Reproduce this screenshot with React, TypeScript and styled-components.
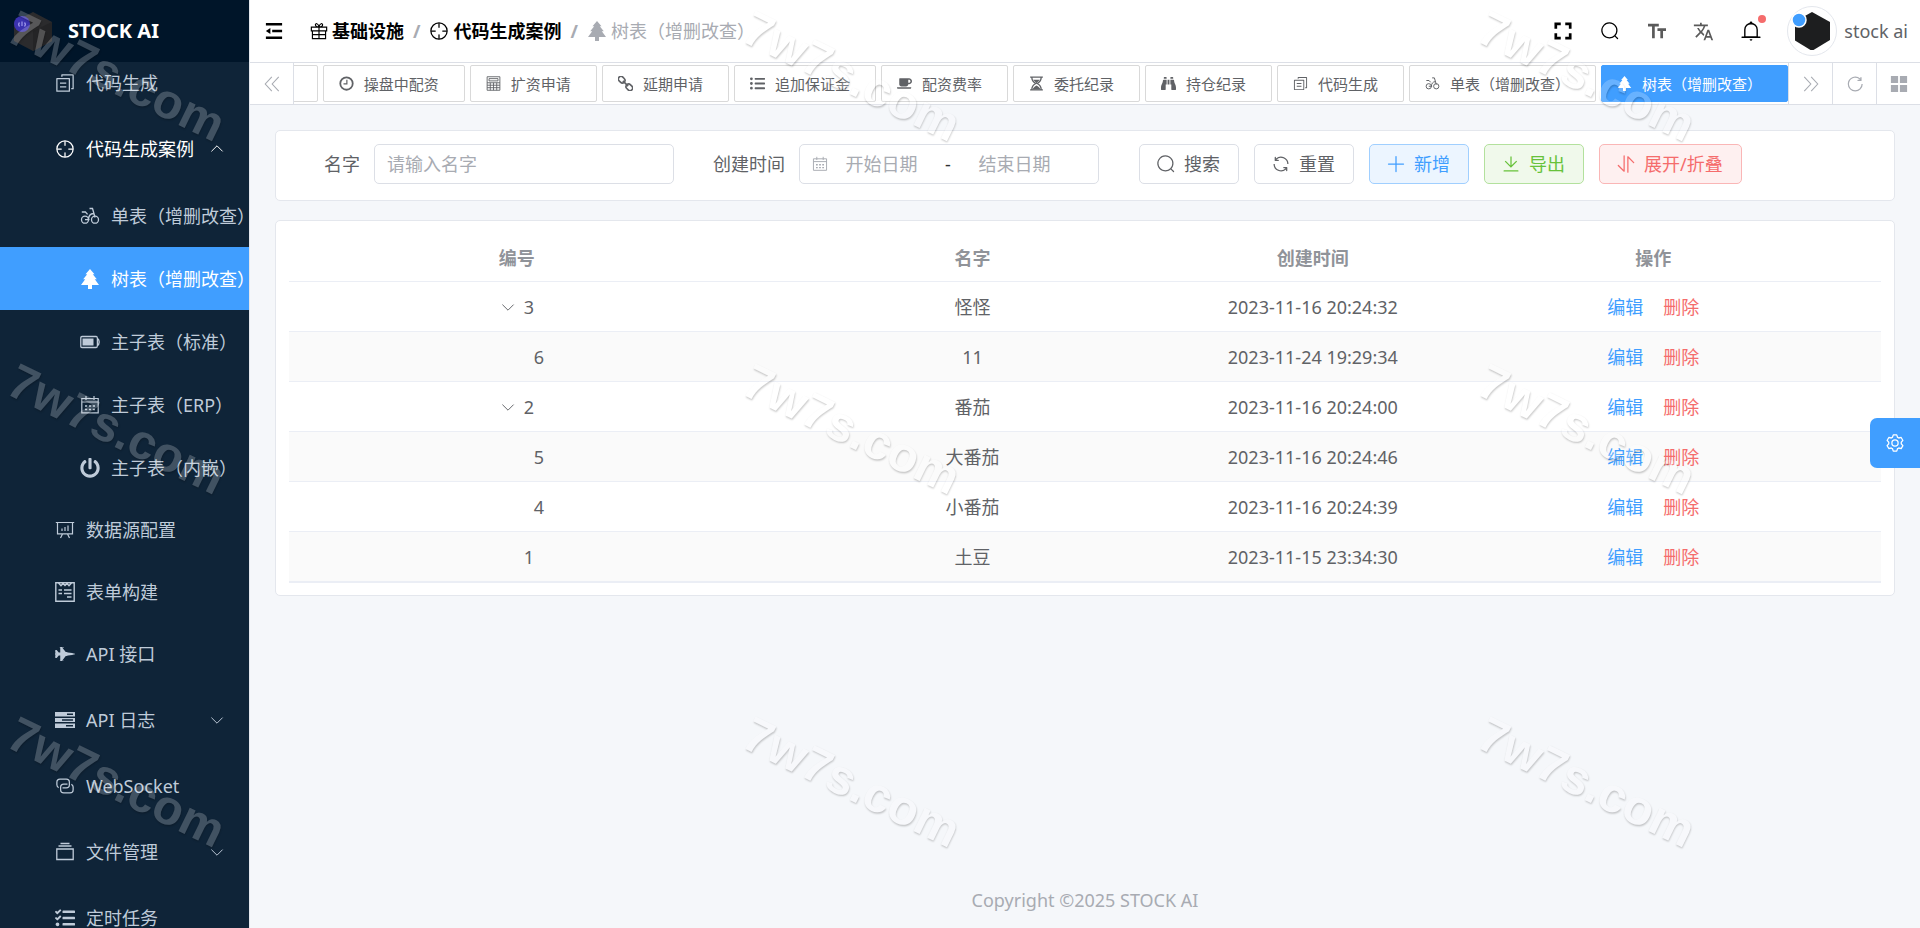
import React from 'react';
import styled, { createGlobalStyle, css } from 'styled-components';
import { MdTranslate } from 'react-icons/md';
import {
  FaPowerOff, FaFighterJet, FaTasks, FaCoffee, FaBinoculars, FaListUl,
} from 'react-icons/fa';

/* ---------- theme values ---------- */
const color = {
  primary: '#409eff',
  success: '#67c23a',
  danger: '#f56c6c',
  text: '#606266',
  muted: '#a8abb2',
  heading: '#909399',
  border: '#dcdfe6',
  borderLight: '#e4e7ed',
  page: '#f5f7fa',
  sidebar: '#0f2438',
  logo: '#001529',
  menuText: '#bfcbd9',
};

const GlobalStyle = createGlobalStyle`
  *, *::before, *::after { box-sizing: border-box; }
  body {
    margin: 0;
    font-family: "Noto Sans", "Noto Sans CJK SC", sans-serif;
    font-size: 18px;
    line-height: 24px;
    color: ${color.text};
    background: ${color.page};
  }
  button, input { font: inherit; color: inherit; }
  button { background: none; border: 0; padding: 0; cursor: pointer; white-space: nowrap; }
  a { color: inherit; text-decoration: none; }
`;

/* ---------- icons ---------- */
const Svg = styled.svg<{ $size?: number }>`
  width: ${p => p.$size ?? 20}px;
  height: ${p => p.$size ?? 20}px;
  flex: none;
  display: block;
`;

type IconProps = { size?: number };

const filled = (...paths: string[]) => ({ size }: IconProps) => (
  <Svg $size={size} viewBox="0 0 1024 1024" fill="currentColor" aria-hidden="true">
    {paths.map(d => <path key={d} d={d} />)}
  </Svg>
);

const lined = (width: number, body: React.ReactNode) => ({ size }: IconProps) => (
  <Svg $size={size} viewBox="0 0 20 20" fill="none" stroke="currentColor" strokeWidth={width} aria-hidden="true">
    {body}
  </Svg>
);

const SearchIcon = filled('m795.904 750.72 124.992 124.928a32 32 0 0 1-45.248 45.248L750.656 795.904a416 416 0 1 1 45.248-45.248zM480 832a352 352 0 1 0 0-704 352 352 0 0 0 0 704z');
const PlusIcon = filled('M480 480V128a32 32 0 0 1 64 0v352h352a32 32 0 1 1 0 64H544v352a32 32 0 1 1-64 0V544H128a32 32 0 0 1 0-64z');
const DownloadIcon = filled('M160 832h704a32 32 0 1 1 0 64H160a32 32 0 1 1 0-64zm384-253.696 236.288-236.352 45.248 45.248L508.8 704 192 387.2l45.248-45.248L480 584.704V128h64v450.304z');
const RefreshIcon = filled('M771.776 794.88A384 384 0 0 1 128 512h64a320 320 0 0 0 555.712 216.448H654.72a32 32 0 1 1 0-64h149.056a32 32 0 0 1 32 32v148.928a32 32 0 1 1-64 0v-50.56zM276.288 295.616h92.992a32 32 0 0 1 0 64H220.16a32 32 0 0 1-32-32V178.56a32 32 0 0 1 64 0v50.56A384 384 0 0 1 896.128 512h-64a320 320 0 0 0-555.776-216.384z');
const ReloadIcon = filled('M784.512 230.272v-50.56a32 32 0 1 1 64 0v149.056a32 32 0 0 1-32 32H667.52a32 32 0 1 1 0-64h92.992A320 320 0 1 0 524.8 833.152a320 320 0 0 0 320-320h64a384 384 0 0 1-384 384 384 384 0 0 1-384-384 384 384 0 0 1 643.712-282.88z');
const SortIcon = filled('M384 96a32 32 0 0 1 64 0v786.752a32 32 0 0 1-54.592 22.656L95.936 608a32 32 0 0 1 0-45.312h.128a32 32 0 0 1 45.184 0L384 805.632V96zm192 45.248a32 32 0 0 1 54.592-22.592L928.064 416a32 32 0 0 1 0 45.312h-.128a32 32 0 0 1-45.184 0L640 218.496V928a32 32 0 1 1-64 0V141.248z');
const AimIcon = filled(
  'M512 896a384 384 0 1 0 0-768 384 384 0 0 0 0 768zm0 64a448 448 0 1 1 0-896 448 448 0 0 1 0 896z',
  'M512 96a32 32 0 0 1 32 32v192a32 32 0 0 1-64 0V128a32 32 0 0 1 32-32zm0 576a32 32 0 0 1 32 32v192a32 32 0 1 1-64 0V704a32 32 0 0 1 32-32zM96 512a32 32 0 0 1 32-32h192a32 32 0 0 1 0 64H128a32 32 0 0 1-32-32zm576 0a32 32 0 0 1 32-32h192a32 32 0 1 1 0 64H704a32 32 0 0 1-32-32z',
);
const CopyIcon = filled('M128 320v576h576V320H128zm-32-64h640a32 32 0 0 1 32 32v640a32 32 0 0 1-32 32H96a32 32 0 0 1-32-32V288a32 32 0 0 1 32-32zM960 96v704a32 32 0 0 1-32 32h-96v-64h64V128H384v64h-64V96a32 32 0 0 1 32-32h576a32 32 0 0 1 32 32zM256 672h320v64H256v-64zm0-192h320v64H256v-64z');
const BellIcon = filled(
  'M512 64a64 64 0 0 1 64 64v64H448v-64a64 64 0 0 1 64-64z',
  'M256 768h512V448a256 256 0 1 0-512 0v320zm256-640a320 320 0 0 1 320 320v384H192V448a320 320 0 0 1 320-320z',
  'M96 768h832q32 0 32 32t-32 32H96q-32 0-32-32t32-32zm352 128h128a64 64 0 0 1-128 0z',
);
const ConnectionIcon = filled(
  'M640 384v64H448a128 128 0 0 0-128 128v128a128 128 0 0 0 128 128h320a128 128 0 0 0 128-128V576a128 128 0 0 0-64-110.848V394.88c74.56 26.368 128 97.472 128 181.056v128a192 192 0 0 1-192 192H448a192 192 0 0 1-192-192V576a192 192 0 0 1 192-192h192z',
  'M384 640v-64h192a128 128 0 0 0 128-128V320a128 128 0 0 0-128-128H256a128 128 0 0 0-128 128v128a128 128 0 0 0 64 110.848v70.272A192.064 192.064 0 0 1 64 448V320a192 192 0 0 1 192-192h320a192 192 0 0 1 192 192v128a192 192 0 0 1-192 192H384z',
);
const SettingIcon = filled('M600.704 64a32 32 0 0 1 30.464 22.208l35.2 109.376c14.784 7.232 28.928 15.36 42.432 24.512l112.384-24.192a32 32 0 0 1 34.432 15.36L944.32 364.8a32 32 0 0 1-4.032 37.504l-77.12 85.12a357.12 357.12 0 0 1 0 49.024l77.12 85.248a32 32 0 0 1 4.032 37.504l-88.704 153.6a32 32 0 0 1-34.432 15.296L708.8 803.904c-13.44 9.088-27.648 17.28-42.368 24.512l-35.264 109.376A32 32 0 0 1 600.704 960H423.296a32 32 0 0 1-30.464-22.208L357.696 828.48a351.616 351.616 0 0 1-42.56-24.64l-112.32 24.256a32 32 0 0 1-34.432-15.36L79.68 659.2a32 32 0 0 1 4.032-37.504l77.12-85.248a357.12 357.12 0 0 1 0-48.896l-77.12-85.248A32 32 0 0 1 79.68 364.8l88.704-153.6a32 32 0 0 1 34.432-15.296l112.32 24.256c13.568-9.152 27.776-17.408 42.56-24.64l35.2-109.312A32 32 0 0 1 423.232 64H600.64zm-23.424 64H446.72l-36.352 113.088-24.512 11.968a294.113 294.113 0 0 0-34.816 20.096l-22.656 15.36-116.224-25.088-65.28 113.152 79.68 88.192-1.92 27.136a293.12 293.12 0 0 0 0 40.192l1.92 27.136-79.808 88.192 65.344 113.152 116.224-25.024 22.656 15.296a294.113 294.113 0 0 0 34.816 20.096l24.512 11.968L446.72 896h130.688l36.48-113.152 24.448-11.904a288.282 288.282 0 0 0 34.752-20.096l22.592-15.296 116.288 25.024 65.28-113.152-79.744-88.192 1.92-27.136a293.12 293.12 0 0 0 0-40.256l-1.92-27.136 79.808-88.128-65.344-113.152-116.288 24.96-22.592-15.232a287.616 287.616 0 0 0-34.752-20.096l-24.448-11.904L577.344 128zM512 320a192 192 0 1 1 0 384 192 192 0 0 1 0-384zm0 64a128 128 0 1 0 0 256 128 128 0 0 0 0-256z');

const ChevronDown = lined(1.2, <path d="M3 7l7 7 7-7" />);
const ChevronUp = lined(1.2, <path d="M3 13l7-7 7 7" />);
const DoubleLeft = lined(1.2, <path d="M9.8 2 2.5 10l7.3 8M17.500 2l-7.300 8 7.300 8" />);
const DoubleRight = lined(1.2, <path d="M2.5 2l7.300 8-7.300 8M10.200 2l7.300 8-7.300 8" />);
const GiftIcon = lined(1.3, <path d="M1.5 5.6h17v4.2h-17zM2.7 9.8v8.6h14.6V9.8M10 5.6v12.8M2.7 14h14.6M10 5.4C8 5.4 6 4.6 6 3s3-2 4 2.4c1-4.4 4-4 4-2.4s-2 2.4-4 2.4z" />);
const ScooterIcon = lined(1.3, (
  <>
    <circle cx="5" cy="13.7" r="3.5" />
    <circle cx="15" cy="13.7" r="3.5" />
    <path d="M9.5 2.5h3l2.6 9M1.8 6h3.6l2.2 2.4M5 13.7h4.5M8.5 13.7c0-3.4 2-6 5-6.2" />
  </>
));
const BatteryIcon = lined(1.3, (
  <>
    <path d="M2 4.500h14.200q1.200 0 1.200 1.900 1.800 1 1.800 3.600t-1.800 3.600q0 1.900-1.200 1.900H2q-1.200 0-1.200-1.200V5.700Q.8 4.500 2 4.500zM17.400 6.400v7.200" />
    <path d="M2.500 6.500h11v7h-11z" fill="currentColor" stroke="none" />
  </>
));
const CalendarIcon = lined(1.2, (
  <>
    <path d="M1.800 3.500h16.400v14.400H1.800zM1.800 7h16.400M6 1v4M14 1v4" />
    <path d="M5 11h10M5 14.500h10" strokeWidth="1.700" strokeDasharray="2.200 1.700" />
  </>
));
const BoardIcon = lined(1.2, <path d="M.8 2.500h18.400M2.500 2.500v11.300h15V2.500M7.500 14l-2 4M12.500 14l2 4M7 8.500V11M10 7v4M13 5.500V11" />);
const FormIcon = lined(1.4, <path d="M.8.800h18.400v18.400H.8zM3.500 1l2.500 2.700L8 1.600l2 2 2-2 2 2.100L16.500 1M3.500 8h3.500M9 8h7.500M3.500 11.500h3.500M9 11.500h7.500M12 15h4.500" />);
const ServerIcon = lined(0, (
  <path
    fill="currentColor" fillRule="evenodd"
    d="M0 2h20v4.500H0zM12 3.500v1.500h6V3.500zM0 8h20v4H0zM7 9.300v1.400h11V9.300zM0 13.500h20V18H0zM11 15v1.500h7V15z"
  />
));
const FilesIcon = lined(1.3, <path d="M1.800 7h16.400v10.500H1.800zM3.500 4h13M5.500 1.500h9" />);
const TreeIcon = lined(0, <path fill="currentColor" d="M10 0l4.500 5.200h-1.700l4 5h-2L19 16h-7v4H8v-4H1l4.200-5.800h-2l4-5H5.500z" />);
const ClockIcon = lined(2.400, <><circle cx="10" cy="10" r="8.300" /><path d="M10.500 5v5.500H6" strokeWidth="1.600" /></>);
const CalculatorIcon = lined(1.2, <path d="M1.500 1h17v18h-17zM4 3.500h12v3H4zM1.500 9h17M1.500 12.300h17M1.500 15.600h17M5.700 9v10M10 9v10M14.300 9v10" />);
const ChainIcon = lined(2.200, (
  <g transform="rotate(45 10 10)">
    <rect x="-2" y="6.500" width="9.500" height="7" rx="3.500" />
    <rect x="12.500" y="6.500" width="9.500" height="7" rx="3.500" />
    <path d="M5 10h10" />
  </g>
));
const HourglassIcon = lined(1.8, (
  <>
    <path d="M1.500 1.500h17M1.500 18.500h17M3.800 2c0 4.500 2.500 6.500 5.200 8-2.700 1.500-5.200 3.500-5.200 8M16.200 2c0 4.500-2.500 6.500-5.200 8 2.700 1.500 5.200 3.500 5.200 8" />
    <path fill="currentColor" stroke="none" d="M5.500 5h9L10 9.500zM5 18c0-3 3-4 5-5.500 2 1.500 5 2.500 5 5.500z" />
  </>
));
const FoldIcon = lined(2.800, (
  <>
    <path d="M1 2.500h18M8 10h11M1 17.500h18" />
    <path fill="currentColor" stroke="none" d="M1 10l5-3.300v6.600z" />
  </>
));
const FullscreenIcon = lined(3, <path d="M2 7.500V2h5.500M12.500 2H18v5.500M18 12.500V18h-5.500M7.500 18H2v-5.500" />);
const TextSizeIcon = lined(3, <path d="M0 3.500h12M6 3.500V18M10.500 8.500H20M15.200 8.500V18" />);
const GridIcon = lined(0, <path fill="currentColor" d="M1 1h8v8H1zM11 1h8v8h-8zM1 11h8v8H1zM11 11h8v8h-8z" />);

const LogoMark = () => (
  <Svg $size={40} viewBox="0 0 40 40" aria-hidden="true">
    <path d="M20 1 39 11v19L20 40 1 30V11z" fill="#2b2b2d" />
    <path d="M20 20 39 11v19L20 40z" fill="#242426" />
    <circle cx="9" cy="13" r="8" fill="#3b32b0" />
    <path d="M6.500 11.500a3 3 0 0 0 0 4M11.500 11.500a3 3 0 0 1 0 4M9 10.500v4.500" stroke="#9d98ec" strokeWidth="1.200" fill="none" />
  </Svg>
);

/* ---------- shell ---------- */
const Shell = styled.div`
  display: grid;
  grid-template-columns: 249px minmax(0, 1fr);
  height: 100vh;
`;

const Sidebar = styled.aside`
  display: flex;
  flex-direction: column;
  min-height: 0;
  background: ${color.sidebar};
  color: ${color.menuText};
`;

const Logo = styled.a`
  display: flex;
  align-items: center;
  gap: 15px;
  flex: none;
  height: 62px;
  padding-left: 13px;
  background: ${color.logo};
  color: #fff;
  font-size: 20px;
  font-weight: 700;
  position: relative;
  z-index: 1;
`;

const MenuScroll = styled.nav`
  flex: 1;
  min-height: 0;
  overflow: hidden;
`;

const Menu = styled.ul`
  list-style: none;
  margin: -10px 0 0;
  padding: 0;
`;

const SubMenu = styled(Menu)`
  margin: 0;
`;

const rowBase = css`
  display: flex;
  align-items: center;
  gap: 11px;
  width: 100%;
  white-space: nowrap;
  svg { flex: none; }
`;

const MenuLink = styled.a<{ $nested?: boolean; $active?: boolean }>`
  ${rowBase}
  height: ${p => (p.$nested ? 63 : 62)}px;
  padding-left: ${p => (p.$nested ? 80 : 55)}px;
  ${p => p.$active && css`background: ${color.primary}; color: #fff;`}
`;

const MenuToggle = styled.button<{ $open?: boolean }>`
  ${rowBase}
  height: 70px;
  padding: 0 24px 0 55px;
  ${p => p.$open && css`color: #fff;`}
  > :last-child { margin-left: auto; }
`;

const Page = styled.div`
  display: flex;
  flex-direction: column;
  min-width: 0;
  min-height: 0;
  border-left: 1px solid ${color.borderLight};
`;

/* ---------- header ---------- */
const Header = styled.header`
  display: flex;
  align-items: center;
  flex: none;
  height: 63px;
  padding: 0 12px 0 15px;
  border-bottom: 1px solid ${color.border};
  background: #fff;
`;

const FoldButton = styled.button`
  color: #000;
  margin-right: 27px;
`;

const Crumbs = styled.ol`
  display: flex;
  align-items: center;
  list-style: none;
  margin: 0 auto 0 0;
  padding: 0;
  white-space: nowrap;
  color: ${color.muted};
`;

const Crumb = styled.li`
  display: flex;
  align-items: center;
  & + &::before {
    content: "/";
    margin: 0 9px;
    font-weight: 700;
  }
`;

const CrumbLink = styled.a<{ $current?: boolean }>`
  display: flex;
  align-items: center;
  gap: 4px;
  color: ${p => (p.$current ? color.muted : '#000')};
  font-weight: ${p => (p.$current ? 400 : 700)};
`;

const ToolButton = styled.button<{ $soft?: boolean }>`
  display: flex;
  align-items: center;
  justify-content: center;
  position: relative;
  width: 47px;
  height: 48px;
  color: ${p => (p.$soft ? '#5a5a5a' : '#000')};
`;

const Dot = styled.span`
  position: absolute;
  top: 8px;
  right: 8px;
  width: 8px;
  height: 8px;
  border-radius: 50%;
  background: ${color.danger};
`;

const User = styled.a`
  display: flex;
  align-items: center;
  gap: 7px;
  margin-left: 13px;
`;

const Avatar = styled.span`
  display: block;
  width: 50px;
  height: 50px;
  border: 1px solid ${color.borderLight};
  border-radius: 50%;
`;

/* ---------- tab strip ---------- */
const TabBar = styled.div`
  display: flex;
  flex: none;
  height: 42px;
  border-bottom: 1px solid ${color.border};
  background: #fff;
  color: ${color.muted};
`;

const BarButton = styled.button<{ $side: 'left' | 'right' }>`
  display: flex;
  align-items: center;
  justify-content: center;
  flex: none;
  width: 44px;
  border-${p => p.$side}: 1px solid ${color.border};
`;

const TabList = styled.nav`
  display: flex;
  justify-content: flex-end;
  gap: 5px;
  flex: 1;
  min-width: 0;
  padding: 2px 0;
  overflow: hidden;
`;

const Tab = styled.a<{ $active?: boolean }>`
  display: flex;
  align-items: center;
  gap: 10px;
  flex: none;
  min-width: 127px;
  padding: 0 25px 0 15px;
  border: 1px solid ${p => (p.$active ? color.primary : '#d9d9d9')};
  border-radius: 2px;
  background: ${p => (p.$active ? color.primary : '#fff')};
  color: ${p => (p.$active ? '#fff' : color.text)};
  font-size: 15px;
  white-space: nowrap;
`;

/* ---------- content ---------- */
const Main = styled.main`
  display: flex;
  flex-direction: column;
  gap: 19px;
  flex: 1;
  min-height: 0;
  padding: 25px 25px 0;
  overflow: hidden;
`;

const Card = styled.section`
  padding: 13px 13px 12px;
  border: 1px solid ${color.borderLight};
  border-radius: 5px;
  background: #fff;
`;

const SearchForm = styled.form`
  display: flex;
  flex-wrap: wrap;
  gap: 0 40px;
  padding-bottom: 4px;
`;

const Field = styled.div`
  display: flex;
  align-items: center;
`;

const Label = styled.label`
  display: flex;
  justify-content: flex-end;
  width: 85px;
  padding-right: 14px;
  white-space: nowrap;
`;

const controlBox = css`
  width: 300px;
  height: 40px;
  border: 1px solid ${color.border};
  border-radius: 5px;
  background: #fff;
`;

const TextInput = styled.input`
  ${controlBox}
  padding: 0 12px;
  outline: 0;
  &::placeholder { color: ${color.muted}; opacity: 1; }
`;

const DateRange = styled.div`
  ${controlBox}
  display: flex;
  align-items: center;
  padding: 0 12px;
  color: ${color.muted};
`;

const DateInput = styled.input`
  width: 107px;
  padding: 0;
  border: 0;
  outline: 0;
  background: none;
  text-align: center;
  &::placeholder { color: ${color.muted}; opacity: 1; }
`;

const Dash = styled.span`
  width: 26px;
  color: #303133;
  text-align: center;
`;

const Actions = styled.div`
  display: flex;
  gap: 15px;
`;

const tones = {
  plain: ['#fff', color.border, color.text],
  primary: ['#ecf5ff', '#a0cfff', color.primary],
  success: ['#f0f9eb', '#b3e19d', color.success],
  danger: ['#fef0f0', '#fab6b6', color.danger],
};

const ActionButton = styled.button<{ $tone: keyof typeof tones }>`
  display: flex;
  align-items: center;
  gap: 8px;
  height: 40px;
  padding: 0 18px 0 16px;
  border: 1px solid ${p => tones[p.$tone][1]};
  border-radius: 5px;
  background: ${p => tones[p.$tone][0]};
  color: ${p => tones[p.$tone][2]};
`;

const Table = styled.table`
  width: 100%;
  table-layout: fixed;
  border-collapse: separate;
  border-spacing: 0;
  border-bottom: 1px solid #ebeef5;
  text-align: center;
`;

const Th = styled.th<{ $width?: number }>`
  width: ${p => (p.$width ? `${p.$width}px` : 'auto')};
  height: 48px;
  padding: 0;
  border-bottom: 1px solid #ebeef5;
  color: ${color.heading};
  font-weight: 700;
`;

const Td = styled.td`
  height: 50px;
  padding: 0;
  border-bottom: 1px solid #ebeef5;
`;

const Row = styled.tr`
  &:nth-child(even) { background: #fafafa; }
`;

const TreeCell = styled.div<{ $level: number }>`
  display: flex;
  align-items: center;
  justify-content: center;
  padding-left: ${p => p.$level * 20}px;
`;

const Expander = styled.button`
  display: flex;
  width: 16px;
  margin-right: 8px;
`;

const Spacer = styled.span`
  width: 24px;
`;

const RowActions = styled.div`
  display: flex;
  justify-content: center;
  gap: 20px;
`;

const TextButton = styled.button<{ $danger?: boolean }>`
  color: ${p => (p.$danger ? color.danger : color.primary)};
`;

const Footer = styled.footer`
  flex: none;
  padding: 16px 0;
  color: ${color.muted};
  text-align: center;
`;

/* ---------- overlays ---------- */
const SettingsHandle = styled.button`
  position: fixed;
  top: 45%;
  right: 0;
  display: flex;
  align-items: center;
  justify-content: center;
  width: 50px;
  height: 50px;
  border-radius: 7px 0 0 7px;
  background: ${color.primary};
  color: #fff;
`;

const WatermarkLayer = styled.div`
  position: fixed;
  inset: 0;
  z-index: 10;
  display: grid;
  grid-template-columns: repeat(auto-fill, 735px);
  grid-auto-rows: 353px;
  width: calc(100% + 735px);
  overflow: hidden;
  opacity: 0.21;
  pointer-events: none;
`;

const Mark = styled.span`
  padding: 3px 0 0 22px;
  color: #fff;
  font: 700 49px/48px "Liberation Sans", Arial, sans-serif;
  text-shadow: 1px 1px 2px #000;
  > span {
    display: inline-block;
    transform: rotate(26deg);
    transform-origin: 0 0;
  }
`;

/* ---------- data ---------- */
type Glyph = React.ComponentType<{ size?: number }>;
type Entry = { label: string; icon: Glyph; active?: boolean };

const tabs: Entry[] = [
  { label: '操盘中配资', icon: ClockIcon },
  { label: '扩资申请', icon: CalculatorIcon },
  { label: '延期申请', icon: ChainIcon },
  { label: '追加保证金', icon: FaListUl },
  { label: '配资费率', icon: FaCoffee },
  { label: '委托纪录', icon: HourglassIcon },
  { label: '持仓纪录', icon: FaBinoculars },
  { label: '代码生成', icon: CopyIcon },
  { label: '单表（增删改查）', icon: ScooterIcon },
  { label: '树表（增删改查）', icon: TreeIcon, active: true },
];

const cases: Entry[] = [
  { label: '单表（增删改查）', icon: ScooterIcon },
  { label: '树表（增删改查）', icon: TreeIcon, active: true },
  { label: '主子表（标准）', icon: BatteryIcon },
  { label: '主子表（ERP）', icon: CalendarIcon },
  { label: '主子表（内嵌）', icon: FaPowerOff },
];

const rows = [
  { id: 3, name: '怪怪', time: '2023-11-16 20:24:32', level: 0, open: true },
  { id: 6, name: '11', time: '2023-11-24 19:29:34', level: 1 },
  { id: 2, name: '番茄', time: '2023-11-16 20:24:00', level: 0, open: true },
  { id: 5, name: '大番茄', time: '2023-11-16 20:24:46', level: 1 },
  { id: 4, name: '小番茄', time: '2023-11-16 20:24:39', level: 1 },
  { id: 1, name: '土豆', time: '2023-11-15 23:34:30', level: 0 },
];

const Item = ({ icon: Icon, label, nested, active }: Entry & { nested?: boolean }) => (
  <li>
    <MenuLink href="#" $nested={nested} $active={active}>
      <Icon size={20} />
      <span>{label}</span>
    </MenuLink>
  </li>
);

const Group = ({ icon: Icon, label, children }: Entry & { children?: React.ReactNode }) => (
  <li>
    <MenuToggle type="button" $open={!!children} aria-expanded={!!children}>
      <Icon size={20} />
      <span>{label}</span>
      {children ? <ChevronUp size={16} /> : <ChevronDown size={16} />}
    </MenuToggle>
    {children && <SubMenu>{children}</SubMenu>}
  </li>
);

export default function App() {
  return (
    <>
      <GlobalStyle />
      <Shell>
        <Sidebar>
          <Logo href="#"><LogoMark />STOCK AI</Logo>
          <MenuScroll>
            <Menu>
              <Item icon={CopyIcon} label="代码生成" />
              <Group icon={AimIcon} label="代码生成案例">
                {cases.map(c => <Item key={c.label} nested {...c} />)}
              </Group>
              <Item icon={BoardIcon} label="数据源配置" />
              <Item icon={FormIcon} label="表单构建" />
              <Item icon={FaFighterJet} label="API 接口" />
              <Group icon={ServerIcon} label="API 日志" />
              <Item icon={ConnectionIcon} label="WebSocket" />
              <Group icon={FilesIcon} label="文件管理" />
              <Item icon={FaTasks} label="定时任务" />
            </Menu>
          </MenuScroll>
        </Sidebar>

        <Page>
          <Header>
            <FoldButton type="button" aria-label="折叠菜单"><FoldIcon size={18} /></FoldButton>
            <Crumbs>
              <Crumb><CrumbLink href="#"><GiftIcon size={18} />基础设施</CrumbLink></Crumb>
              <Crumb><CrumbLink href="#"><AimIcon size={20} />代码生成案例</CrumbLink></Crumb>
              <Crumb><CrumbLink href="#" $current><TreeIcon size={20} />树表（增删改查）</CrumbLink></Crumb>
            </Crumbs>
            <ToolButton type="button" aria-label="全屏"><FullscreenIcon size={18} /></ToolButton>
            <ToolButton type="button" aria-label="搜索菜单"><SearchIcon size={20} /></ToolButton>
            <ToolButton type="button" aria-label="字号" $soft><TextSizeIcon size={18} /></ToolButton>
            <ToolButton type="button" aria-label="语言" $soft><MdTranslate size={21} /></ToolButton>
            <ToolButton type="button" aria-label="消息"><BellIcon size={22} /><Dot /></ToolButton>
            <User href="#">
              <Avatar>
                <Svg $size={48} viewBox="0 0 48 48" aria-hidden="true">
                  <path d="M24 5 42 15v18L25.500 43h-3L7 33.500V14.500z" fill="#1d1e1f" />
                  <circle cx="11" cy="13" r="7" fill={color.primary} stroke="#fff" strokeWidth="1.500" />
                </Svg>
              </Avatar>
              <span>stock ai</span>
            </User>
          </Header>

          <TabBar>
            <BarButton type="button" $side="right" aria-label="向左滚动"><DoubleLeft size={18} /></BarButton>
            <TabList>
              <Tab href="#" />
              {tabs.map(({ label, icon: Icon, active }) => (
                <Tab key={label} href="#" $active={active}><Icon size={15} />{label}</Tab>
              ))}
            </TabList>
            <BarButton type="button" $side="left" aria-label="向右滚动"><DoubleRight size={18} /></BarButton>
            <BarButton type="button" $side="left" aria-label="刷新"><ReloadIcon size={20} /></BarButton>
            <BarButton type="button" $side="left" aria-label="更多"><GridIcon size={18} /></BarButton>
          </TabBar>

          <Main>
            <Card>
              <SearchForm onSubmit={e => e.preventDefault()}>
                <Field>
                  <Label htmlFor="name">名字</Label>
                  <TextInput id="name" placeholder="请输入名字" />
                </Field>
                <Field>
                  <Label htmlFor="start">创建时间</Label>
                  <DateRange>
                    <CalendarIcon size={16} />
                    <DateInput id="start" placeholder="开始日期" />
                    <Dash>-</Dash>
                    <DateInput aria-label="结束日期" placeholder="结束日期" />
                  </DateRange>
                </Field>
                <Actions>
                  <ActionButton type="submit" $tone="plain"><SearchIcon size={20} />搜索</ActionButton>
                  <ActionButton type="reset" $tone="plain"><RefreshIcon size={20} />重置</ActionButton>
                  <ActionButton type="button" $tone="primary"><PlusIcon size={20} />新增</ActionButton>
                  <ActionButton type="button" $tone="success"><DownloadIcon size={20} />导出</ActionButton>
                  <ActionButton type="button" $tone="danger"><SortIcon size={20} />展开/折叠</ActionButton>
                </Actions>
              </SearchForm>
            </Card>

            <Card>
              <Table>
                <thead>
                  <tr>
                    <Th>编号</Th>
                    <Th>名字</Th>
                    <Th $width={225}>创建时间</Th>
                    <Th>操作</Th>
                  </tr>
                </thead>
                <tbody>
                  {rows.map(r => (
                    <Row key={r.id}>
                      <Td>
                        <TreeCell $level={r.level}>
                          {r.open
                            ? <Expander type="button" aria-label="折叠"><ChevronDown size={16} /></Expander>
                            : <Spacer />}
                          {r.id}
                        </TreeCell>
                      </Td>
                      <Td>{r.name}</Td>
                      <Td>{r.time}</Td>
                      <Td>
                        <RowActions>
                          <TextButton type="button">编辑</TextButton>
                          <TextButton type="button" $danger>删除</TextButton>
                        </RowActions>
                      </Td>
                    </Row>
                  ))}
                </tbody>
              </Table>
            </Card>
          </Main>

          <Footer>Copyright ©2025 STOCK AI</Footer>
        </Page>
      </Shell>

      <SettingsHandle type="button" aria-label="设置"><SettingIcon size={20} /></SettingsHandle>
      <WatermarkLayer aria-hidden="true">
        {Array.from({ length: 9 }, (_, i) => <Mark key={i}><span>7w7s.com</span></Mark>)}
      </WatermarkLayer>
    </>
  );
}
